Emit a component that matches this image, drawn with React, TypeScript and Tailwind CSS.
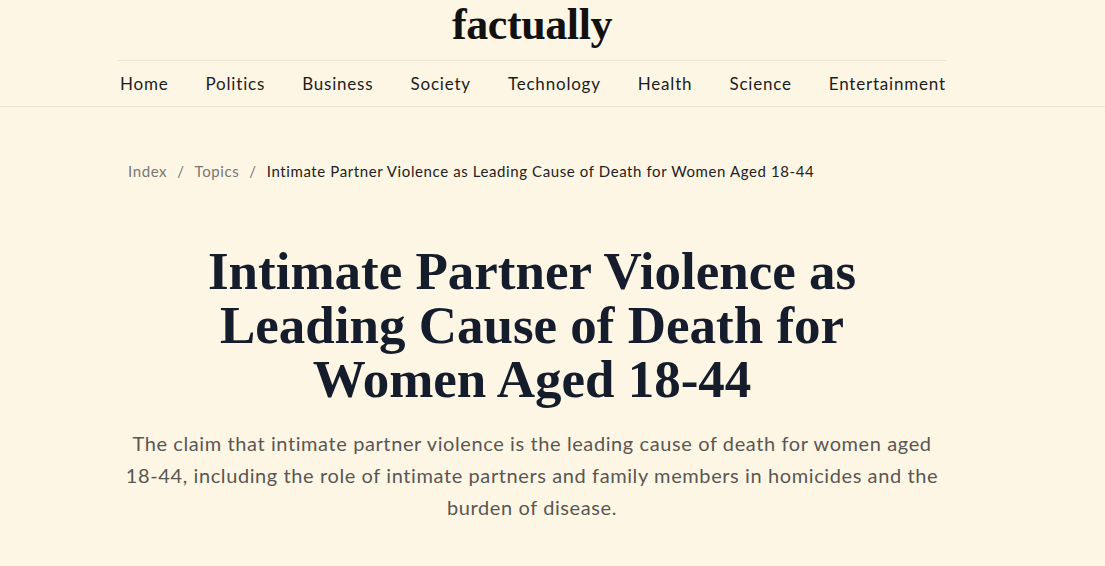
const navLinks = [
  "Home",
  "Politics",
  "Business",
  "Society",
  "Technology",
  "Health",
  "Science",
  "Entertainment",
];

const sans = "font-['Lato','Noto_Sans',sans-serif]";
const serif = "font-['Liberation_Serif','DejaVu_Serif',serif]";

function Header() {
  return (
    <header className="border-b border-[#ece3cf]">
      <div className="ml-[118px] w-[828px]">
        <div className="flex h-[61px] items-start justify-center border-b border-[#ece3cf]">
          <a href="#" className={`${serif} text-[44px] font-bold leading-[50px] tracking-[-0.4px] text-[#111]`}>
            factually
          </a>
        </div>
        <nav className={`${sans} flex h-[45px] items-center justify-between pl-[2px] text-[17px] tracking-[0.8px] text-[#1c1c1c]`}>
          {navLinks.map((link) => (
            <a key={link} href="#" className="hover:underline">
              {link}
            </a>
          ))}
        </nav>
      </div>
    </header>
  );
}

function Breadcrumb() {
  return (
    <ol className={`${sans} flex items-center gap-[10px] text-[15px] tracking-[0.6px] text-[#7a7670]`}>
      <li>
        <a href="#">Index</a>
      </li>
      <li>/</li>
      <li>
        <a href="#">Topics</a>
      </li>
      <li>/</li>
      <li className="text-[#222]">
        Intimate Partner Violence as Leading Cause of Death for Women Aged 18-44
      </li>
    </ol>
  );
}

export default function App() {
  return (
    <div className="min-h-screen bg-[#fdf6e5]">
      <Header />
      <main className="ml-[118px] w-[828px]">
        <div className="px-[10px] pt-[53px]">
          <Breadcrumb />
        </div>
        <article className="mt-[61px] flex flex-col items-center text-center">
          <h1 className={`${serif} w-[720px] text-[53px] font-bold leading-[54px] text-[#151c2b]`}>
            Intimate Partner Violence as Leading Cause of Death for Women Aged 18-44
          </h1>
          <p className={`${sans} mt-[21px] w-[828px] text-[20px] leading-[32px] tracking-[0.6px] text-[#5a5753]`}>
            The claim that intimate partner violence is the leading cause of death for women aged
            18-44, including the role of intimate partners and family members in homicides and the
            burden of disease.
          </p>
        </article>
      </main>
    </div>
  );
}
